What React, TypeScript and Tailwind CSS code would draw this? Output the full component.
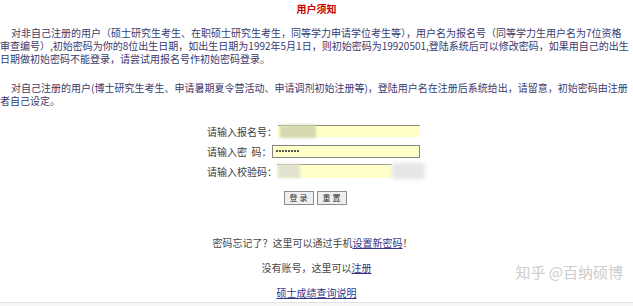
import React from 'react';

const font = "font-['Noto_Sans_CJK_SC','Microsoft_YaHei',sans-serif]";

export default function App() {
  return (
    <div className={`relative w-[633px] h-[306px] overflow-hidden bg-white ${font} text-[10px] flex flex-col`}>
      {/* title */}
      <div className="pt-[2px] text-center font-bold leading-[13px] text-[#c40000]">用户须知</div>

      {/* notice */}
      <div className="mt-[11px] leading-[13px] text-[#3a3a6e] whitespace-nowrap">
        <div className="pl-[11px]">对非自己注册的用户（硕士研究生考生、在职硕士研究生考生，同等学力申请学位考生等），用户名为报名号（同等学力生用户名为7位资格</div>
        <div>审查编号）,初始密码为你的8位出生日期，如出生日期为1992年5月1日，则初始密码为19920501,登陆系统后可以修改密码，如果用自己的出生</div>
        <div>日期做初始密码不能登录，请尝试用报名号作初始密码登录。</div>
      </div>
      <div className="mt-[16px] leading-[13px] text-[#3a3a6e] whitespace-nowrap">
        <div className="pl-[11px]">对自己注册的用户(博士研究生考生、申请暑期夏令营活动、申请调剂初始注册等)，登陆用户名在注册后系统给出，请留意，初始密码由注册</div>
        <div>者自己设定。</div>
      </div>

      {/* login form */}
      <div className="mt-[14px] pl-[207px] flex flex-col text-[#3c3c3c]">
        <div className="h-[20px] flex items-center">
          <span className="w-[71px]">请输入报名号：</span>
          <div className="relative w-[142px] h-[12px] bg-[#ffffc6] border-t border-[#8a8a70]">
            <div className="absolute left-[2px] top-[-1px] w-[36px] h-[13px] bg-[#d6d8b0] blur-[1.5px]" />
          </div>
        </div>
        <div className="h-[20px] flex items-center">
          <span className="w-[65px]">请输入密&nbsp;&nbsp;码：</span>
          <div className="w-[148px] h-[13px] bg-[#ffffc8] border border-[#858585] flex items-center gap-[1px] pl-[3px]">
            {Array.from({ length: 8 }, (_, i) => (
              <span key={i} className="w-[2px] h-[2px] rounded-full bg-[#1e1e1e]" />
            ))}
          </div>
        </div>
        <div className="h-[20px] flex items-center">
          <span className="w-[70px]">请输入校验码：</span>
          <div className="relative w-[115px] h-[14px] bg-[#ffffc8] border-t border-[#a0a08a]">
            <div className="absolute left-[1px] top-[-1px] w-[22px] h-[14px] bg-[#e2e2d0] blur-[1.5px]" />
          </div>
          <div className="w-[33px] h-[16px] bg-[#e6e6e6] blur-[2px]" />
        </div>
      </div>

      <div className="mt-[10px] flex justify-center gap-[3px] pr-[3px]">
        <button className="w-[30px] h-[14px] bg-[#efefef] border border-[#8c8c8c] text-[8px] leading-none text-[#333]">登 录</button>
        <button className="w-[30px] h-[14px] bg-[#efefef] border border-[#8c8c8c] text-[8px] leading-none text-[#333]">重 置</button>
      </div>

      {/* links */}
      <div className="mt-[31px] text-center leading-[13px] text-[#474747] pr-[8px]">
        密码忘记了？这里可以通过手机<a className="underline text-[#35358a]">设置新密码</a>！
      </div>
      <div className="mt-[12px] text-center leading-[13px] text-[#474747]">
        没有账号，这里可以<a className="underline text-[#35358a]">注册</a>
      </div>
      <div className="mt-[12px] text-center leading-[13px]">
        <a className="underline text-[#35358a]">硕士成绩查询说明</a>
      </div>

      <div className="mt-[3px] flex-1 border-t border-[#e2e2e2] bg-[#f6f6f6]" />

      {/* watermark */}
      <div className="absolute right-[10px] top-[263px] text-[15px] leading-[18px] text-[#cdcdcd] [text-shadow:0_0_1px_#ffffff]">
        知乎 @百纳硕博
      </div>
    </div>
  );
}
